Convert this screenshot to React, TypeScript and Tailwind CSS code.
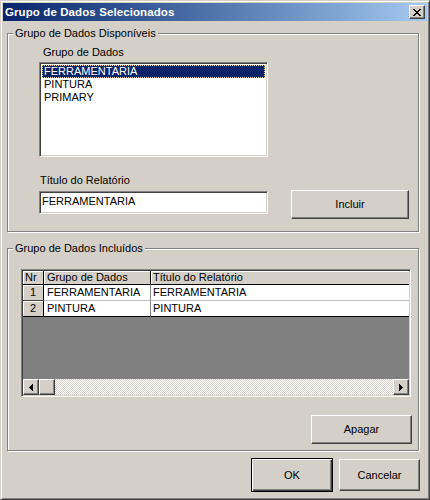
import React from "react";

const RAISED =
  "bg-[#d4d0c8] border border-t-white border-l-white border-r-[#404040] border-b-[#404040] shadow-[inset_-1px_-1px_0_#808080]";
const SUNKEN =
  "border border-t-[#808080] border-l-[#808080] border-r-white border-b-white shadow-[inset_1px_1px_0_#404040,inset_-1px_-1px_0_#d4d0c8]";
const GROUP =
  "border border-[#808080] shadow-[1px_1px_0_#ffffff,inset_1px_1px_0_#ffffff] ml-[4px] w-[412px] min-w-0";

const Arrow = ({ dir }: { dir: "left" | "right" }) => (
  <svg width="4" height="7" viewBox="0 0 4 7" shapeRendering="crispEdges">
    {dir === "left" ? <path d="M4 0V7L0 3.5Z" fill="#000" /> : <path d="M0 0V7L4 3.5Z" fill="#000" />}
  </svg>
);

const rows = [
  { nr: "1", grupo: "FERRAMENTARIA", titulo: "FERRAMENTARIA" },
  { nr: "2", grupo: "PINTURA", titulo: "PINTURA" },
];

export default function App() {
  return (
    <div className="w-[430px] h-[500px] bg-[#d4d0c8] border border-t-[#d4d0c8] border-l-[#d4d0c8] border-r-[#404040] border-b-[#404040] shadow-[inset_1px_1px_0_#ffffff,inset_-1px_-1px_0_#808080] p-[2px] flex flex-col font-['Liberation_Sans',_Arial,_sans-serif] text-[11px] leading-[13px] text-black select-none">
      {/* title bar */}
      <div className="h-[18px] flex items-center bg-gradient-to-r from-[#0a246a] to-[#a6caf0]">
        <span className="pl-[2px] text-white font-bold text-[11.5px] tracking-[0.1px]">Grupo de Dados Selecionados</span>
        <div className={`ml-auto mr-[2px] w-[16px] h-[14px] flex items-center justify-center ${RAISED}`}>
          <svg width="8" height="7" viewBox="0 0 8 7" shapeRendering="crispEdges">
            <path d="M0 0h2l2 2.4L6 0h2L5 3.5 8 7H6L4 4.6 2 7H0l3-3.5z" fill="#000" />
          </svg>
        </div>
      </div>

      {/* group 1 */}
      <fieldset className={`mt-[6px] ${GROUP}`}>
        <legend className="ml-[5px] px-[2px] bg-[#d4d0c8] leading-[13px]">Grupo de Dados Disponíveis</legend>
        <div className="pt-[6px] pl-[31px] pb-[12px] flex flex-col">
          <div className="ml-[4px]">Grupo de Dados</div>
          <div className={`mt-[3px] w-[229px] h-[95px] bg-white p-[2px] ${SUNKEN}`}>
            <div className="h-[13px] bg-[#0a246a] text-white pl-[2px] outline outline-1 outline-dotted outline-[#f0dc9a] -outline-offset-1">
              FERRAMENTARIA
            </div>
            <div className="h-[13px] pl-[2px]">PINTURA</div>
            <div className="h-[13px] pl-[2px]">PRIMARY</div>
          </div>
          <div className="mt-[17px] ml-[1px]">Título do Relatório</div>
          <div className="mt-[4px] flex items-start">
            <div className={`w-[229px] h-[23px] bg-white pl-[2px] pt-[3px] ${SUNKEN}`}>FERRAMENTARIA</div>
            <div className={`ml-[23px] -mt-[1px] w-[118px] h-[29px] flex items-center justify-center ${RAISED}`}>
              Incluir
            </div>
          </div>
        </div>
      </fieldset>

      {/* group 2 */}
      <fieldset className={`mt-[10px] ${GROUP}`}>
        <legend className="ml-[5px] px-[2px] bg-[#d4d0c8] leading-[13px]">Grupo de Dados Incluídos</legend>
        <div className="pt-[14px] pl-[13px] pr-[6px] pb-[6px] flex flex-col">
          <div className={`w-[390px] h-[128px] flex flex-col overflow-hidden p-[1px] ${SUNKEN}`}>
            {/* header */}
            <div className="flex h-[14px] shrink-0">
              <div className="w-[21px] bg-[#d4d0c8] border-r border-b border-black shadow-[inset_1px_1px_0_#ffffff] pl-[2px]">Nr</div>
              <div className="w-[107px] bg-[#d4d0c8] border-r border-b border-black shadow-[inset_1px_1px_0_#ffffff] pl-[3px]">Grupo de Dados</div>
              <div className="flex-1 bg-[#d4d0c8] border-b border-black shadow-[inset_1px_1px_0_#ffffff] pl-[2px]">Título do Relatório</div>
            </div>
            {rows.map((r, i) => {
              const last = i === rows.length - 1;
              return (
                <div key={r.nr} className="flex h-[16px] shrink-0">
                  <div
                    className={`w-[21px] bg-[#d4d0c8] border-r border-b border-r-black shadow-[inset_1px_1px_0_#ffffff] flex items-center justify-center ${
                      last ? "border-b-black" : "border-b-[#404040]"
                    }`}
                  >
                    {r.nr}
                  </div>
                  <div
                    className={`w-[107px] bg-white border-r border-b border-r-[#808080] pl-[3px] flex items-center ${
                      last ? "border-b-black" : "border-b-[#c0c0c0]"
                    }`}
                  >
                    {r.grupo}
                  </div>
                  <div
                    className={`flex-1 bg-white border-b pl-[2px] flex items-center ${
                      last ? "border-b-black" : "border-b-[#c0c0c0]"
                    }`}
                  >
                    {r.titulo}
                  </div>
                </div>
              );
            })}
            <div className="flex-1 bg-[#808080]" />
            {/* horizontal scrollbar */}
            <div className="flex h-[16px] shrink-0">
              <div className={`w-[16px] flex items-center justify-center ${RAISED}`}>
                <Arrow dir="left" />
              </div>
              <div className={`w-[16px] ${RAISED}`} />
              <div className="flex-1 bg-[repeating-conic-gradient(#ffffff_0_25%,#d4d0c8_0_50%)] bg-[length:2px_2px]" />
              <div className={`w-[16px] flex items-center justify-center ${RAISED}`}>
                <Arrow dir="right" />
              </div>
            </div>
          </div>
          <div className="mt-[18px] flex justify-end">
            <div className={`w-[101px] h-[29px] flex items-center justify-center ${RAISED}`}>Apagar</div>
          </div>
        </div>
      </fieldset>

      {/* dialog buttons */}
      <div className="mt-[7px] flex justify-end items-start gap-[6px] pr-[7px]">
        <div className="w-[82px] h-[34px] flex items-center justify-center bg-[#d4d0c8] border border-black shadow-[inset_1px_1px_0_#ffffff,inset_-1px_-1px_0_#404040,inset_-2px_-2px_0_#808080]">
          OK
        </div>
        <div className={`mt-[1px] w-[81px] h-[32px] flex items-center justify-center ${RAISED}`}>Cancelar</div>
      </div>
    </div>
  );
}
